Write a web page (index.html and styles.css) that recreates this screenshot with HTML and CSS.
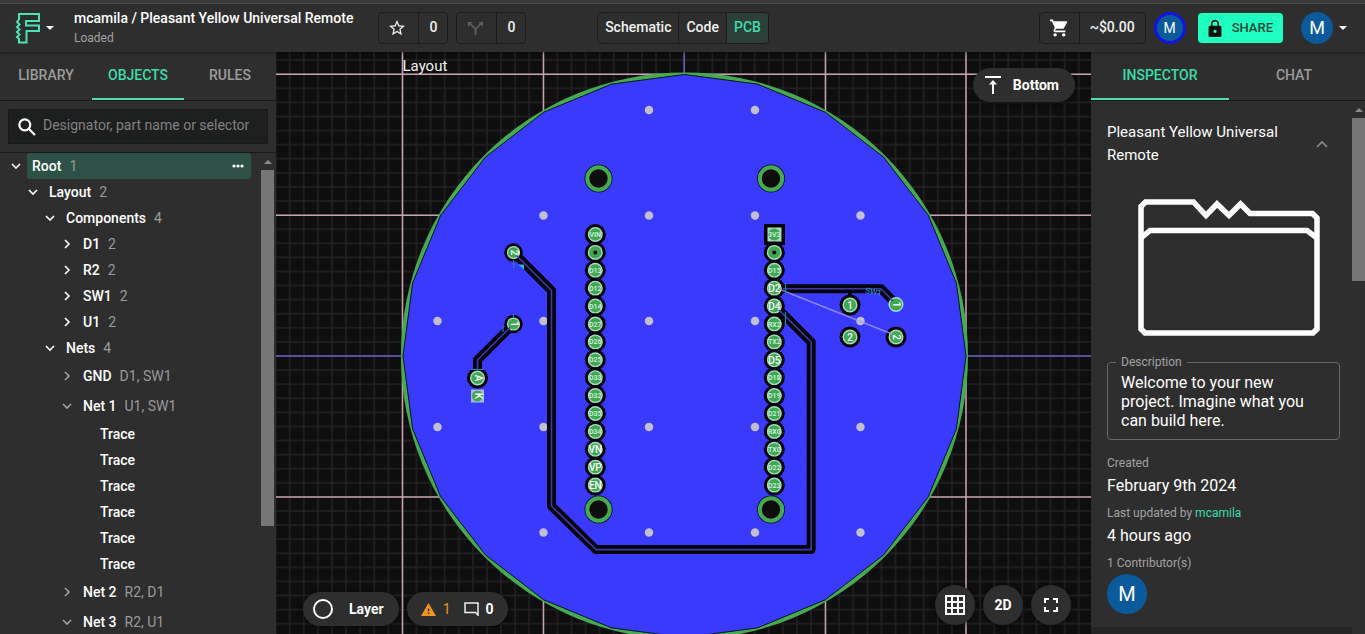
FILE: index.html
```html
<!DOCTYPE html>
<html lang="en">
<head>
<meta charset="utf-8">
<meta name="viewport" content="width=device-width, initial-scale=1">
<title>Pleasant Yellow Universal Remote</title>
<link rel="stylesheet" href="styles.css">
</head>
<body>
<svg width="0" height="0" class="defs" aria-hidden="true">
  <symbol id="down" viewBox="0 0 10 10"><path d="M1 3l4 4 4-4" fill="none" stroke="currentColor" stroke-width="1.6"/></symbol>
  <symbol id="right" viewBox="0 0 10 10"><path d="M3 1l4 4-4 4" fill="none" stroke="currentColor" stroke-width="1.6"/></symbol>
  <symbol id="caret" viewBox="0 0 8 4"><path d="M0 0h8L4 4z" fill="currentColor"/></symbol>
</svg>

<header class="topbar">
  <div class="topbar-left">
    <button class="logo" aria-label="Main menu">
      <svg width="26" height="32" viewBox="0 0 26 32"><path d="M5 2H25V9H12V13.500H25V19H12.500V30.500H5V27L3 25l2.500-2.500L3 20l2.500-2.500L3 15l2.500-2.500L3 10l2-2.500V2Z" fill="none" stroke="#4be3b5" stroke-width="2"/></svg>
      <svg class="caret"><use href="#caret"/></svg>
    </button>
    <div class="project">
      <div class="project-name">mcamila / Pleasant Yellow Universal Remote</div>
      <div class="project-state">Loaded</div>
    </div>
    <div class="group">
      <button class="cell icon-cell" aria-label="Star"><svg width="16" height="16" viewBox="2 2 20 20"><path fill="#eee" d="M22 9.240l-7.190-.620L12 2 9.190 8.630 2 9.240l5.460 4.730L5.820 21 12 17.270 18.180 21l-1.630-7.030L22 9.240zM12 15.400l-3.760 2.270 1-4.280-3.320-2.880 4.380-.380L12 6.100l1.710 4.040 4.380.380-3.320 2.880 1 4.280L12 15.400z"/></svg></button>
      <button class="cell count">0</button>
    </div>
    <div class="group">
      <button class="cell icon-cell" aria-label="Fork"><svg width="15" height="15" viewBox="0 0 16 16" fill="none" stroke="#5e5e5e" stroke-width="1.800"><path d="M8 15V10Q8 8 6 6.500L2.500 3M8 10Q8 8 10 6.500L13.500 3"/><path d="M0 6V1H5zM16 6V1H11z" fill="#5e5e5e" stroke="none"/></svg></button>
      <button class="cell count">0</button>
    </div>
  </div>
  <nav class="group views" aria-label="Views">
    <button class="cell">Schematic</button><button class="cell">Code</button><button class="cell active">PCB</button>
  </nav>
  <div class="topbar-right">
    <div class="group">
      <button class="cell icon-cell" aria-label="Cart"><svg width="18" height="18" viewBox="1 2 21 20"><path fill="#fff" d="M7 18c-1.100 0-1.990.900-1.990 2S5.900 22 7 22s2-.900 2-2-.900-2-2-2zM1 2v2h2l3.600 7.590-1.350 2.450c-.160.280-.250.610-.250.960 0 1.100.900 2 2 2h12v-2H7.420c-.140 0-.250-.110-.250-.250l.030-.120.900-1.630h7.450c.750 0 1.410-.410 1.750-1.030l3.580-6.490A1 1 0 0 0 20 4H5.210l-.940-2H1zm16 16c-1.100 0-1.990.900-1.990 2s.890 2 1.990 2 2-.900 2-2-.900-2-2-2z"/></svg></button>
      <button class="cell price">~$0.00</button>
    </div>
    <span class="avatar ringed">M</span>
    <button class="share"><svg width="14" height="17" viewBox="4 1 16 21"><path fill="#06120e" d="M18 8h-1V6A5 5 0 0 0 7 6v2H6a2 2 0 0 0-2 2v10c0 1.100.900 2 2 2h12a2 2 0 0 0 2-2V10a2 2 0 0 0-2-2zm-6 9a2 2 0 1 1 0-4 2 2 0 0 1 0 4zm3.100-9H8.900V6a3.100 3.100 0 0 1 6.200 0v2z"/></svg>SHARE</button>
    <button class="account" aria-label="Account"><span class="avatar">M</span><svg class="caret"><use href="#caret"/></svg></button>
  </div>
</header>

<main class="workspace">
  <aside class="panel objects">
    <div class="tabs" role="tablist">
      <button class="tab" role="tab">LIBRARY</button>
      <button class="tab selected" role="tab" aria-selected="true">OBJECTS</button>
      <button class="tab" role="tab">RULES</button>
    </div>
    <div class="search">
      <svg width="18" height="18" viewBox="0 0 18 18" fill="none" stroke="#fff" stroke-width="2.200"><circle cx="6.800" cy="6.800" r="5.500"/><path d="M11 11l6 6"/></svg>
      <input type="text" aria-label="Search objects" placeholder="Designator, part name or selector">
    </div>
    <div class="tree-area">
      <ul class="tree">
        <li class="row l0 current"><svg class="arrow"><use href="#down"/></svg><span class="fill"><b>Root</b> <i>1</i><button class="more" aria-label="More"><svg width="12" height="4" viewBox="0 0 12 4" fill="#fff"><circle cx="2" cy="2" r="1.600"/><circle cx="6" cy="2" r="1.600"/><circle cx="10" cy="2" r="1.600"/></svg></button></span></li>
        <li class="row l1"><svg class="arrow"><use href="#down"/></svg><b>Layout</b> <i>2</i></li>
        <li class="row l2"><svg class="arrow"><use href="#down"/></svg><b>Components</b> <i>4</i></li>
        <li class="row l3"><svg class="arrow"><use href="#right"/></svg><b>D1</b> <i>2</i></li>
        <li class="row l3"><svg class="arrow"><use href="#right"/></svg><b>R2</b> <i>2</i></li>
        <li class="row l3"><svg class="arrow"><use href="#right"/></svg><b>SW1</b> <i>2</i></li>
        <li class="row l3"><svg class="arrow"><use href="#right"/></svg><b>U1</b> <i>2</i></li>
        <li class="row l2"><svg class="arrow"><use href="#down"/></svg><b>Nets</b> <i>4</i></li>
        <li class="row l3 net"><svg class="arrow"><use href="#right"/></svg><b>GND</b> <i>D1, SW1</i></li>
        <li class="row l3 net"><svg class="arrow"><use href="#down"/></svg><b>Net 1</b> <i>U1, SW1</i></li>
        <li class="row leaf"><b>Trace</b></li>
        <li class="row leaf"><b>Trace</b></li>
        <li class="row leaf"><b>Trace</b></li>
        <li class="row leaf"><b>Trace</b></li>
        <li class="row leaf"><b>Trace</b></li>
        <li class="row leaf"><b>Trace</b></li>
        <li class="row l3 net"><svg class="arrow"><use href="#right"/></svg><b>Net 2</b> <i>R2, D1</i></li>
        <li class="row l3 net"><svg class="arrow"><use href="#down"/></svg><b>Net 3</b> <i>R2, U1</i></li>
      </ul>
      <div class="scroll" aria-hidden="true"><svg class="caret up"><use href="#caret"/></svg><div class="thumb tall"></div></div>
    </div>
  </aside>

  <section class="canvas" aria-label="PCB layout">
    <svg class="board" viewBox="276 52 815 582" preserveAspectRatio="xMidYMid slice">
      <defs>
        <pattern id="minor" x="684.200" y="356" width="14.090" height="14.090" patternUnits="userSpaceOnUse"><path d="M0 0H14.090M0 14.090H14.090M0 0V14.090M14.090 0V14.090" stroke="#252125" stroke-width="1.400"/></pattern>
        <g id="hole"><circle r="14" fill="#04102a"/><circle r="11.200" fill="#0e0d0e" stroke="#46ab50" stroke-width="4"/></g>
        <g id="pad"><circle r="6.800" fill="#3fa750" stroke="#a5dcc4" stroke-width="1.400"/></g>
        <g id="pin"><circle r="10.500" fill="#000006"/><use href="#pad"/></g>
      </defs>
      <rect x="-1000" y="-1000" width="4000" height="3000" fill="#0f0e0f"/>
      <rect x="-1000" y="-1000" width="4000" height="3000" fill="url(#minor)"/>
      <path d="M402.500-1000V2000M543.500-1000V2000M825.500-1000V2000M966-1000V2000M-1000 74.300H3000M-1000 215.300H3000M-1000 497H3000" stroke="#c9a3af" stroke-width="1.500"/>
      <path d="M684.200-1000V2000M-1000 356H3000" stroke="#6a63c4" stroke-width="1.500"/>
      <text class="layer-label" x="402.500" y="71">Layout</text>
      <circle cx="684.500" cy="356" r="283.500" fill="#46ab50"/>
      <polygon transform="translate(684.500 356)" fill="#3a3aff" stroke="#07131c" stroke-width="1" points="0,-281.500 72.900,-271.900 140.800,-243.800 199,-199 243.800,-140.800 271.900,-72.900 281.500,0 271.900,72.900 243.800,140.800 199,199 140.800,243.800 72.900,271.900 0,281.500 -72.900,271.900 -140.800,243.800 -199,199 -243.800,140.800 -271.900,72.900 -281.500,0 -271.900,-72.900 -243.800,-140.800 -199,-199 -140.800,-243.800 -72.900,-271.900"/>
      <path class="vias" d="M649 110h0M755 110h0M543.500 215.500h0M649 215.500h0M755 215.500h0M860.500 215.500h0M437.500 321h0M543.500 321h0M649 321h0M755 321h0M860.500 321h0M437.500 427h0M543.500 427h0M649 427h0M755 427h0M860.500 427h0M543.500 532.500h0M649 532.500h0M755 532.500h0M860.500 532.500h0"/>
      <g fill="none" stroke-linejoin="round">
        <g stroke="#02020f" stroke-width="9"><path d="M513.500 252.500L551.500 290.500V506L596 549.600H811.200V342L775 306"/><path d="M774 288.700H881L896 304"/><path d="M513.500 324L477.500 360V378"/></g>
        <path d="M850 290V305" stroke="#000006" stroke-width="4"/>
      </g>
      <use href="#hole" x="598.500" y="178.500"/><use href="#hole" x="771" y="178.500"/><use href="#hole" x="598.500" y="509.500"/><use href="#hole" x="771" y="509.500"/>
      <g id="left-pins"><use href="#pin" x="595.300" y="234.500"/><use href="#pin" x="595.300" y="252.400"/><use href="#pin" x="595.300" y="270.300"/><use href="#pin" x="595.300" y="288.200"/><use href="#pin" x="595.300" y="306.100"/><use href="#pin" x="595.300" y="324"/><use href="#pin" x="595.300" y="341.900"/><use href="#pin" x="595.300" y="359.800"/><use href="#pin" x="595.300" y="377.700"/><use href="#pin" x="595.300" y="395.600"/><use href="#pin" x="595.300" y="413.500"/><use href="#pin" x="595.300" y="431.400"/><use href="#pin" x="595.300" y="449.300"/><use href="#pin" x="595.300" y="467.200"/><use href="#pin" x="595.300" y="485.100"/></g>
      <use href="#left-pins" x="179"/>
      <rect x="764" y="224" width="21" height="21" fill="#000006"/><rect x="767.500" y="227.500" width="14" height="14" fill="#a5dcc4"/><circle cx="774.300" cy="234.500" r="6" fill="#3fa750"/>
      <circle cx="595.300" cy="252.400" r="2"/><circle cx="774.300" cy="252.400" r="2"/>
      <use href="#pin" x="850" y="305"/><use href="#pin" x="850" y="337"/><use href="#pad" x="896" y="304.500"/><use href="#pin" x="896" y="337"/>
      <g transform="translate(513.500 252.500) scale(.88)"><use href="#pin"/></g><g transform="translate(513.500 324) scale(.88)"><use href="#pin"/></g><use href="#pin" x="477.500" y="378"/>
      <rect x="471" y="389.500" width="13" height="13" fill="#a7b8f0"/><circle cx="477.500" cy="396" r="5.500" fill="#3fa750"/>
      <g fill="none" stroke="#3c3ca4" stroke-width="1.600"><path d="M517 256L551.500 290.500V506L596 549.600H811.200V342L779 310M783 288.700H881L893 301M510 327.500L477.500 360V370"/></g>
      <path d="M779 289L892 334" stroke="#a3a0ff" stroke-width="1.400" opacity=".75"/>
      <g fill="none" stroke="#1b84a8" stroke-width="1.200"><path d="M785.500 283V294M785.500 312V325M471 369.500H484M513.500 314V318M513.500 260V268M503 326V332"/></g>
      <path d="M518 264.500h6v5z" fill="#21b5e8"/>
      <text class="ref" transform="translate(865 293) rotate(10)">SW1</text>
      <g class="tiny">
        <text x="595.300" y="237">VIN</text><text x="595.300" y="272.800">D13</text><text x="595.300" y="290.700">D12</text><text x="595.300" y="308.600">D14</text><text x="595.300" y="326.500">D27</text><text x="595.300" y="344.400">D26</text><text x="595.300" y="362.300">D25</text><text x="595.300" y="380.200">D33</text><text x="595.300" y="398.100">D32</text><text x="595.300" y="416">D35</text><text x="595.300" y="433.900">D34</text>
        <text x="774.300" y="237">3V3</text><text x="774.300" y="272.800">D15</text><text x="774.300" y="326.500">RX2</text><text x="774.300" y="344.400">TX2</text><text x="774.300" y="380.200">D18</text><text x="774.300" y="398.100">D19</text><text x="774.300" y="416">D21</text><text x="774.300" y="433.900">RX0</text><text x="774.300" y="451.800">TX0</text><text x="774.300" y="469.700">D22</text><text x="774.300" y="487.600">D23</text>
      </g>
      <g class="small">
        <text x="595.300" y="452.800">VN</text><text x="595.300" y="470.700">VP</text><text x="595.300" y="488.600">EN</text>
        <text x="774.300" y="292">D2</text><text x="774.300" y="310">D4</text><text x="774.300" y="363.500">D5</text>
        <text x="850" y="309">1</text><text x="850" y="341">2</text>
        <text transform="translate(893 304.500) rotate(90)">1</text><text transform="translate(893 337) rotate(90)">2</text>
        <text transform="translate(510.500 252.500) rotate(90)">2</text><text transform="translate(510.500 324) rotate(90)">1</text>
        <text transform="translate(474.500 378) rotate(90)">A</text><text transform="translate(474.500 396) rotate(90)">K</text>
      </g>
    </svg>

    <button class="pill side"><svg width="16" height="18" viewBox="0 0 16 18" fill="#fff"><path d="M0 0h16v2H0zM8 4l4 4.500H9V18H7V8.500H4z"/></svg>Bottom</button>
    <div class="dock dock-left">
      <button class="pill layer"><svg width="20" height="20" viewBox="0 0 20 20"><circle cx="10" cy="10" r="9" fill="none" stroke="#fff" stroke-width="2"/></svg>Layer</button>
      <button class="pill issues">
        <svg width="15" height="13" viewBox="0 0 22 19"><path fill="#ef9420" d="M0 19h22L11 0 0 19zm12-3h-2v-2h2v2zm0-4h-2V8h2v4z"/></svg><span class="warn">1</span>
        <svg class="comment" width="15" height="14" viewBox="0 0 15 14"><path d="M1 1H14V13L11.500 10.500H1Z" fill="none" stroke="#eee" stroke-width="1.500"/></svg><span>0</span>
      </button>
    </div>
    <div class="dock dock-right">
      <button class="round" aria-label="Grid"><svg width="20" height="20" viewBox="0 0 20 20"><path d="M1 1H19V19H1ZM7 1V19M13 1V19M1 7H19M1 13H19" fill="none" stroke="#fff" stroke-width="2"/></svg></button>
      <button class="round">2D</button>
      <button class="round" aria-label="Fit to screen"><svg width="14" height="14" viewBox="0 0 14 14"><path d="M1 5V1H5M9 1H13V5M13 9V13H9M5 13H1V9" fill="none" stroke="#fff" stroke-width="2"/></svg></button>
    </div>
  </section>

  <aside class="panel inspector">
    <div class="tabs" role="tablist">
      <button class="tab selected" role="tab" aria-selected="true">INSPECTOR</button>
      <button class="tab" role="tab">CHAT</button>
    </div>
    <div class="inspector-area">
      <div class="details">
        <div class="details-head">
          <h2>Pleasant Yellow Universal Remote</h2>
          <button class="collapse" aria-label="Collapse"><svg width="12" height="8" viewBox="0 0 12 8"><path d="M1 7l5-5 5 5" fill="none" stroke="#8c8c8c" stroke-width="1.600"/></svg></button>
        </div>
        <svg class="folder" width="182" height="137" viewBox="0 0 182 137" fill="none" stroke="#fff" stroke-width="5.500"><path d="M3 7.500L7.500 3H55.500L68 16.500L79 5L91 16.500L102.500 5L112 14.500H174.500L179 19V130L175 134H7L3 130Z"/><path d="M3 39L12 31.500H169L179 39"/></svg>
        <div class="field">
          <label for="description">Description</label>
          <textarea id="description" rows="3">Welcome to your new project. Imagine what you can build here.</textarea>
        </div>
        <dl>
          <dt>Created</dt><dd>February 9th 2024</dd>
          <dt>Last updated by <a href="#mcamila">mcamila</a></dt><dd>4 hours ago</dd>
          <dt>1 Contributor(s)</dt>
        </dl>
        <span class="avatar large">M</span>
      </div>
      <div class="scroll" aria-hidden="true"><svg class="caret up"><use href="#caret"/></svg><div class="thumb short"></div></div>
    </div>
  </aside>
</main>
</body>
</html>
```

FILE: styles.css
```css
* { box-sizing: border-box; }
body {
  margin: 0;
  height: 100vh;
  display: flex;
  flex-direction: column;
  overflow: hidden;
  background: #2e2e2e;
  color: #fff;
  font: 400 14px/20px Roboto, "Liberation Sans", sans-serif;
}
button {
  margin: 0;
  padding: 0;
  border: 0;
  background: none;
  color: inherit;
  font: inherit;
  cursor: pointer;
}
svg { display: block; flex: none; }
.defs { position: absolute; }
.caret { width: 8px; height: 4px; }
.up { transform: rotate(180deg); color: #8a8a8a; }

/* Top bar */
.topbar {
  position: relative;
  z-index: 2;
  flex: none;
  display: grid;
  grid-template-columns: 1fr auto 1fr;
  align-items: center;
  height: 52px;
  padding: 4px 16px 0 14px;
  background: linear-gradient(#3a3a3a 3px, #4c4c4c 3px, #4c4c4c 4px, #2e2e2e 4px);
  box-shadow: 0 1px 4px rgba(0, 0, 0, .45);
}
.topbar-left, .topbar-right { display: flex; align-items: center; }
.topbar-left { gap: 8px; }
.topbar-right { justify-content: flex-end; padding-right: 2px; }
.logo { display: flex; align-items: center; gap: 6px; }
.project { margin: 0 17px 0 12px; white-space: nowrap; }
.project-name { font-weight: 500; }
.project-state { font-size: 12px; color: #a2a2a2; }
.group {
  display: flex;
  height: 32px;
  border: 1px solid #1b1b1b;
  border-radius: 4px;
  overflow: hidden;
}
.views { margin-left: 3px; }
.cell {
  display: flex;
  align-items: center;
  justify-content: center;
  padding: 0 7px 2px;
  font-weight: 500;
  color: #f0f0f0;
}
.cell + .cell { border-left: 1px solid #1b1b1b; }
.icon-cell { width: 39px; padding: 0 3px 0 0; }
.count { width: 29px; }
.price { padding: 0 10px 2px; }
.topbar-right .icon-cell { padding: 0; }
.cell.active { background: #2b4039; color: #3ddcab; }
.avatar {
  display: flex;
  align-items: center;
  justify-content: center;
  width: 32px;
  height: 32px;
  border-radius: 50%;
  background: #0a5a9c;
  font-size: 18px;
}
.avatar.ringed { margin: 0 12px 0 8px; border: 3px solid #1414e0; font-size: 14px; }
.avatar.large { width: 40px; height: 40px; font-size: 20px; }
.share {
  display: flex;
  align-items: center;
  gap: 10px;
  height: 30px;
  padding: 0 10px;
  border-radius: 4px;
  background: #1fffc0;
  color: #12483a;
  font-size: 13px;
  font-weight: 500;
}
.account { display: flex; align-items: center; gap: 6px; margin-left: 18px; }

/* Panels */
.workspace { flex: 1; min-height: 0; display: flex; }
.panel { flex: none; display: flex; flex-direction: column; min-height: 0; background: #2e2e2e; }
.objects { width: 276px; }
.inspector { width: 274px; }
.tabs { flex: none; display: flex; height: 49px; border-bottom: 1px solid #1a1a1a; }
.inspector .tabs { padding-right: 6px; }
.inspector .tab.selected { flex: 0 0 138px; }
.tab {
  flex: 1;
  height: 48px;
  border-bottom: 2px solid transparent;
  color: #9c9c9c;
  font-size: 14px;
  font-weight: 500;
}
.tab.selected { border-color: #4fdcae; color: #3ddcab; }
.search {
  flex: none;
  display: flex;
  align-items: center;
  gap: 7px;
  height: 35px;
  margin: 8px 8px 8px;
  padding: 0 9px;
  border: 1px solid #191919;
  background: #1d1f1e;
}
.search input {
  flex: 1;
  min-width: 0;
  padding: 0 0 4px;
  border: 0;
  outline: 0;
  background: none;
  color: #fff;
  font: inherit;
}
.search input::placeholder { color: #818181; opacity: 1; }
.tree-area { flex: 1; min-height: 0; display: flex; border-top: 1px solid #1a1a1a; }
.tree { flex: 1; margin: 0; padding: 0; list-style: none; overflow: hidden; }
.row { display: flex; align-items: center; height: 26px; padding-bottom: 1px; white-space: nowrap; }
.row b { font-weight: 500; margin-right: 8px; }
.row i { font-style: normal; color: #9a9a9a; }
.arrow { width: 10px; height: 10px; margin-right: 11px; }
.l0 { padding-left: 11px; }
.l0 .arrow { margin-right: 6px; }
.l1 { padding-left: 28px; }
.l2 { padding-left: 45px; }
.l3 { padding-left: 62px; }
.leaf { padding-left: 100px; }
.net { height: 30px; }
.net .arrow { color: #a0a0a0; }
.fill {
  flex: 1;
  display: flex;
  align-items: center;
  height: 26px;
  margin-right: 10px;
  padding: 0 7px 0 5px;
  border-radius: 3px;
  background: #2d5146;
}
.more { margin-left: auto; }
.scroll { flex: none; width: 13px; display: flex; flex-direction: column; align-items: center; gap: 6px; padding-top: 7px; }
.tree-area .scroll { margin-right: 2px; }
.thumb { width: 100%; background: #767676; }
.thumb.tall { height: 75%; }
.thumb.short { height: 31%; }

/* Canvas */
.canvas { position: relative; flex: 1; min-width: 0; overflow: hidden; background: #0f0e0f; }
.board { width: 100%; height: 100%; }
.layer-label { font-size: 15px; fill: #f2f2f2; }
.vias { fill: none; stroke: #c2bfd2; stroke-width: 8.500px; stroke-linecap: round; }
.tiny, .small { fill: #fff; font-weight: 500; text-anchor: middle; }
.tiny { font-size: 7px; fill: #d9f2e3; }
.small { font-size: 10px; }
.ref { font-size: 8px; fill: #2aa5d8; }
.pill {
  display: flex;
  align-items: center;
  height: 34px;
  border-radius: 17px;
  background: #2e2e2e;
  font-weight: 700;
  box-shadow: 0 1px 4px rgba(0, 0, 0, .5);
}
.side { position: absolute; top: 16px; right: 16px; gap: 12px; padding: 0 16px 0 12px; }
.dock { position: absolute; display: flex; gap: 8px; }
.dock-left { left: 27px; bottom: 8px; }
.dock-right { right: 20px; bottom: 9px; }
.layer { gap: 16px; padding: 0 15px 0 10px; }
.issues { gap: 7px; padding: 0 14px; }
.warn { color: #ef9420; font-weight: 400; }
.comment { margin-left: 6px; }
.round {
  display: flex;
  align-items: center;
  justify-content: center;
  width: 40px;
  height: 40px;
  border-radius: 50%;
  background: #2e2e2e;
  font-weight: 700;
  box-shadow: 0 1px 4px rgba(0, 0, 0, .5);
}

/* Inspector */
.inspector-area { flex: 1; min-height: 0; display: flex; }
.details { flex: 1; padding: 20px 12px 12px 16px; border-bottom: 7px solid #242424; overflow: hidden; }
.details-head { display: flex; align-items: center; justify-content: space-between; padding-right: 12px; }
.details h2 { margin: 0; font-size: 15px; line-height: 23px; font-weight: 400; max-width: 180px; }
.folder { margin: 32px auto 26px 31px; }
.field { position: relative; border: 1px solid #696969; border-radius: 4px; padding: 10px 13px 9px; }
.field label {
  position: absolute;
  top: -9px;
  left: 8px;
  padding: 0 5px;
  background: #2e2e2e;
  color: #a2a2a2;
  font-size: 12px;
  line-height: 16px;
}
textarea {
  display: block;
  width: 100%;
  padding: 0;
  border: 0;
  outline: 0;
  resize: none;
  overflow: hidden;
  background: none;
  color: #fff;
  font: inherit;
  font-size: 16px;
  line-height: 19px;
}
dl { margin: 14px 0 2px; }
dt { font-size: 12px; line-height: 18px; color: #a2a2a2; }
dd { margin: 0 0 4px; font-size: 16px; line-height: 28px; }
dt a { color: #3ddcab; text-decoration: none; }
```
